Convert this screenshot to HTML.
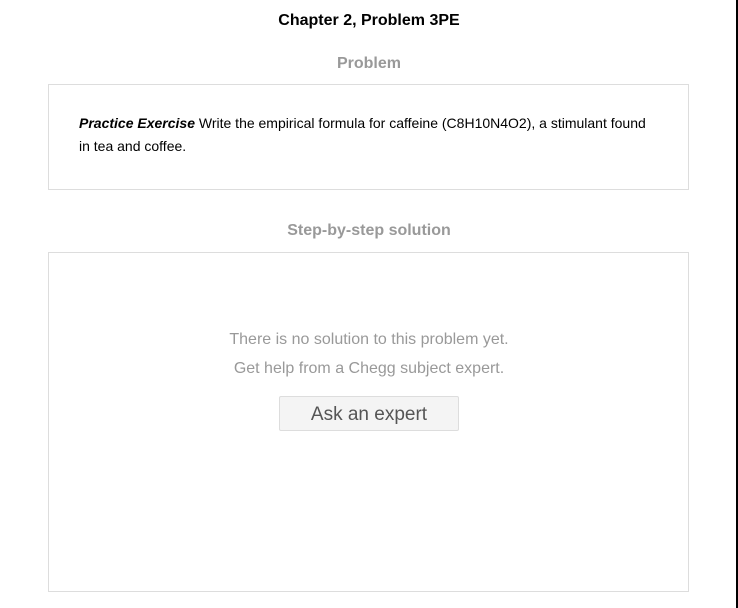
<!DOCTYPE html>
<html><head><style>
body{margin:0;width:738px;height:608px;background:#fff;position:relative;overflow:hidden;font-family:"Liberation Sans",Arial,sans-serif}
.vl{position:absolute;left:736px;top:0;width:2px;height:608px;background:#000}
.t{position:absolute;left:0;width:738px;text-align:center;font-weight:bold}
.box{position:absolute;left:48px;width:639px;border:1px solid #ddd;box-sizing:content-box}
.g{position:absolute;left:0;width:738px;text-align:center;color:#999;font-size:16px}
.btn{position:absolute;left:279px;top:396px;width:178px;height:33px;border:1px solid #ddd;border-radius:2px;background:#f4f4f4;color:#555;font-size:19px;text-align:center;line-height:35px}
</style></head><body>
<div class="vl"></div>
<div class="t" style="top:12px;font-size:16px;color:#000">Chapter 2, Problem 3PE</div>
<div class="t" style="top:55px;font-size:16px;color:#999">Problem</div>
<div class="box" style="top:84px;height:104px"></div>
<div style="position:absolute;left:79px;top:112px;width:578px;font-size:14px;line-height:23px;color:#000"><b><i>Practice Exercise</i></b> Write the empirical formula for caffeine (C8H10N4O2), a stimulant found in tea and coffee.</div>
<div class="t" style="top:222px;font-size:16px;color:#999">Step-by-step solution</div>
<div class="box" style="top:252px;height:338px"></div>
<div class="g" style="top:331px">There is no solution to this problem yet.</div>
<div class="g" style="top:360px">Get help from a Chegg subject expert.</div>
<div class="btn">Ask an expert</div>
</body></html>
